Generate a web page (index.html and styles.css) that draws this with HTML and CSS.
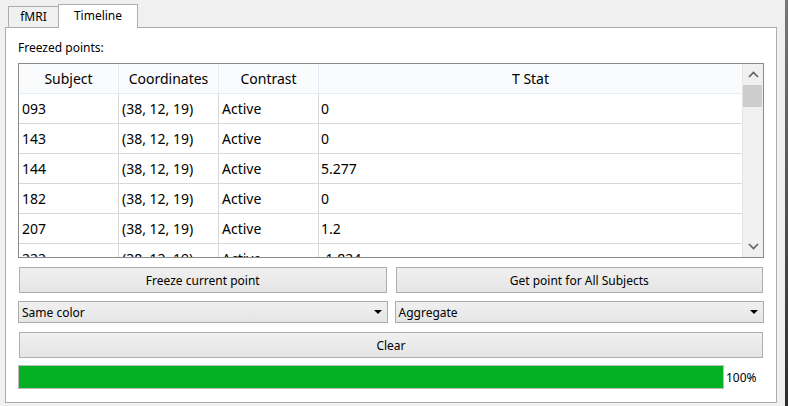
FILE: index.html
```html
<!DOCTYPE html>
<html>
<head>
<meta charset="utf-8">
<link rel="stylesheet" href="styles.css">
</head>
<body>
<div class="window">
  <div class="main">
    <div class="tabs">
      <div class="tab">fMRI</div>
      <div class="tab active">Timeline</div>
    </div>
    <div class="panel">
      <div class="label">Freezed points:</div>
      <div class="table">
        <div class="grid">
          <div class="head">
            <div class="hc">Subject</div>
            <div class="hc">Coordinates</div>
            <div class="hc">Contrast</div>
            <div class="hc last">T Stat</div>
          </div>
          <div class="rows">
            <div class="row"><div class="c">093</div><div class="c">(38, 12, 19)</div><div class="c">Active</div><div class="c last">0</div></div>
            <div class="row"><div class="c">143</div><div class="c">(38, 12, 19)</div><div class="c">Active</div><div class="c last">0</div></div>
            <div class="row"><div class="c">144</div><div class="c">(38, 12, 19)</div><div class="c">Active</div><div class="c last">5.277</div></div>
            <div class="row"><div class="c">182</div><div class="c">(38, 12, 19)</div><div class="c">Active</div><div class="c last">0</div></div>
            <div class="row"><div class="c">207</div><div class="c">(38, 12, 19)</div><div class="c">Active</div><div class="c last">1.2</div></div>
            <div class="row"><div class="c">222</div><div class="c">(38, 12, 19)</div><div class="c">Active</div><div class="c last">-1.824</div></div>
          </div>
        </div>
        <div class="vscroll">
          <div class="arrow">
            <svg width="11" height="7" viewBox="0 0 11 7"><path d="M1 6 L5.5 1.5 L10 6" fill="none" stroke="#606060" stroke-width="1.6"/></svg>
          </div>
          <div class="track"><div class="thumb"></div></div>
          <div class="arrow">
            <svg width="11" height="7" viewBox="0 0 11 7"><path d="M1 1 L5.5 5.5 L10 1" fill="none" stroke="#606060" stroke-width="1.6"/></svg>
          </div>
        </div>
      </div>
      <div class="btnrow">
        <div class="btn">Freeze current point</div>
        <div class="btn">Get point for All Subjects</div>
      </div>
      <div class="comborow">
        <div class="combo"><span>Same color</span><span class="tri"></span></div>
        <div class="combo"><span>Aggregate</span><span class="tri"></span></div>
      </div>
      <div class="btn clear">Clear</div>
      <div class="progrow">
        <div class="progress"><div class="fill" style="width:100%"></div></div>
        <div class="pct">100%</div>
      </div>
    </div>
  </div>
  <div class="edge"></div>
</div>
</body>
</html>
```

FILE: styles.css
```css
* { box-sizing: border-box; }
html, body { margin: 0; padding: 0; }
body {
  background: #f0f0f0;
  font-family: "Noto Sans", "Open Sans", sans-serif;
  font-size: 12px;
  color: #000;
}
.window {
  width: 788px;
  height: 406px;
  display: flex;
  background: #f0f0f0;
}
.main {
  width: 785px;
  padding: 4px 8px 0 5px;
  display: flex;
  flex-direction: column;
}
.edge {
  width: 3px;
  height: 406px;
  background: linear-gradient(#787878, #2c2c2c);
}
.tabs {
  display: flex;
  align-items: flex-end;
  height: 23px;
  padding-left: 3px;
  position: relative;
  z-index: 2;
}
.tab {
  width: 51px;
  height: 21px;
  border: 1px solid #adadad;
  border-bottom: none;
  background: #f0f0f0;
  display: flex;
  align-items: center;
  justify-content: center;
  line-height: 16px;
}
.tab.active {
  width: 80px;
  height: 24px;
  margin-bottom: -1px;
  margin-left: -1px;
  background: #fff;
  padding-bottom: 2px;
}
.panel {
  height: 376px;
  border: 1px solid #adadad;
  background: #fff;
  padding: 12px 12px 0 12px;
  display: flex;
  flex-direction: column;
}
.label {
  height: 16px;
  line-height: 16px;
  margin-bottom: 7px;
}
.table {
  height: 195px;
  border: 1px solid #8a8a8a;
  display: flex;
  overflow: hidden;
  font-size: 14px;
}
.grid {
  flex: 1;
  display: flex;
  flex-direction: column;
  overflow: hidden;
}
.head {
  display: flex;
  height: 30px;
  background: #fafbfd;
  border-bottom: 1px solid #e5ecf5;
  flex-shrink: 0;
}
.hc {
  width: 100px;
  border-right: 1px solid #e5ecf5;
  display: flex;
  align-items: center;
  justify-content: center;
}
.hc.last { flex: 1; border-right: none; }
.rows { display: flex; flex-direction: column; }
.row {
  display: flex;
  height: 30px;
  flex-shrink: 0;
  border-bottom: 1px solid #d8d8d8;
}
.c {
  width: 100px;
  border-right: 1px solid #d8d8d8;
  padding-left: 3px;
  display: flex;
  align-items: center;
}
.c.last { flex: 1; border-right: none; padding-left: 2px; }
.vscroll {
  width: 21px;
  border-left: 1px solid #e6e6e6;
  background: #f0f0f0;
  display: flex;
  flex-direction: column;
}
.arrow {
  height: 21px;
  display: flex;
  align-items: center;
  justify-content: center;
  flex-shrink: 0;
}
.track { flex: 1; }
.thumb {
  height: 22px;
  margin: 0 1px 0 0;
  background: #cdcdcd;
}
.btnrow {
  display: flex;
  gap: 9px;
  margin: 9px 1px 0 1px;
}
.btn {
  flex: 1;
  height: 26px;
  border: 1px solid #adadad;
  background: linear-gradient(#f0f0f0, #e5e5e5);
  display: flex;
  align-items: center;
  justify-content: center;
}
.comborow {
  display: flex;
  gap: 7px;
  margin-top: 8px;
}
.combo {
  flex: 1;
  height: 22px;
  border: 1px solid #acacac;
  background: linear-gradient(#f0f0f0, #e5e5e5);
  display: flex;
  align-items: center;
  justify-content: space-between;
  padding: 0 5px 0 3px;
}
.tri {
  width: 0;
  height: 0;
  border-left: 4px solid transparent;
  border-right: 4px solid transparent;
  border-top: 4px solid #000;
}
.btn.clear {
  flex: none;
  margin: 9px 1px 0 1px;
}
.progrow {
  display: flex;
  align-items: center;
  margin-top: 7px;
  height: 24px;
}
.progress {
  width: 706px;
  height: 24px;
  border: 1px solid #bcbcbc;
  background: #e6e6e6;
}
.fill {
  height: 100%;
  background: #06b025;
}
.pct {
  margin-left: 2px;
}
```
